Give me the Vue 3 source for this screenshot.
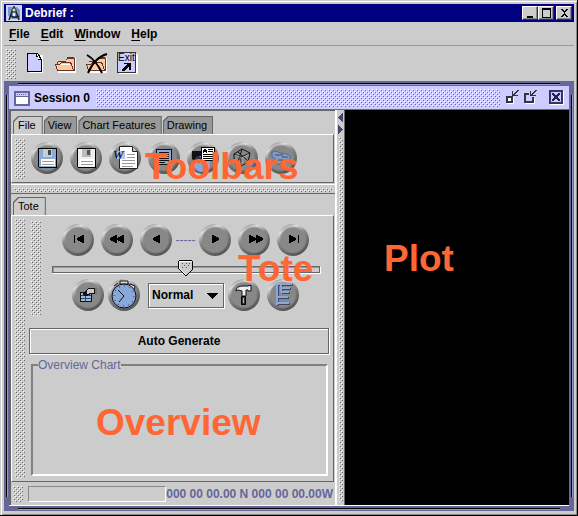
<script setup>
import { ref } from 'vue'

const menus = ['File', 'Edit', 'Window', 'Help']
const tabs = ['File', 'View', 'Chart Features', 'Drawing']
const activeTab = ref('File')
const speed = ref('Normal')
const time = ref(50)

const back = [
  { label: 'Go to start', d: 'M11 10h1v8h-1zM21 10v8h-1l-6-3v-2l6-3z' },
  { label: 'Rewind', d: 'M15 10v8h-1l-6-3v-2l6-3zM22 10v8h-1l-6-3v-2l6-3z' },
  { label: 'Step back', d: 'M19 10v8h-1l-6-3v-2l6-3z' }
]
const forward = [
  { label: 'Step forward', d: 'M12 10v8h1l6-3v-2l-6-3z' },
  { label: 'Fast forward', d: 'M10 10v8h1l6-3v-2l-6-3zM17 10v8h1l6-3v-2l-6-3z' },
  { label: 'Go to end', d: 'M11 10v8h1l6-3v-2l-6-3zM20 10h1v8h-1z' }
]
</script>

<template>
  <div class="window">
    <header class="titlebar">
      <svg class="logo" width="16" height="16" viewBox="0 0 16 16">
        <path fill="#ccd6f0" d="M0 0h16v16H0z" />
        <path fill="#7895cf" d="M2 2h9l3 3v9H5l-3-4z" />
        <path d="M8 1v3M7 4L3 15M9 4l4 11M4 10q4 4 9 1" fill="none" stroke="#222" stroke-width="1.5" />
        <circle cx="8" cy="5" r="2" fill="#ddd" stroke="#333" />
        <path d="M8 8v3" stroke="#eee" stroke-width="2" />
      </svg>
      <h1>Debrief :</h1>
      <div class="winbuttons">
        <button aria-label="Minimize"><svg width="13" height="11"><path d="M3 8h6v2H3z" /></svg></button>
        <button aria-label="Maximize"><svg width="13" height="11"><path d="M2 0h9v10H2zM3 2v7h7V2z" fill-rule="evenodd" /></svg></button>
        <button aria-label="Close" class="close"><svg width="13" height="11"><path d="M3 1h2v1h1v1h1V2h1V1h2v1H9v1H8v1H7v2h1v1h1v1h1v1H8V8H7V7H6v1H5v1H3V8h1V7h1V6h1V4H5V3H4V2H3z" /></svg></button>
      </div>
    </header>

    <nav class="menubar">
      <button v-for="m in menus" :key="m"><u>{{ m[0] }}</u>{{ m.slice(1) }}</button>
    </nav>

    <div class="toolbar">
      <span class="bumps grip"></span>
      <button aria-label="New">
        <svg width="24" height="24" shape-rendering="crispEdges">
          <path fill="#fff" d="M6 3h14v18H6z" /><path fill="#000" d="M4 1h11v1h1v1h1v2h1v2h1v13H4z" />
          <path fill="#ccccff" d="M5 2h8v3h2v3h3v11H5z" /><path fill="#fff" d="M14 2h1v2h1v2h1v1h-2V4h-1z" />
        </svg>
      </button>
      <button aria-label="Open">
        <svg width="24" height="24" shape-rendering="crispEdges">
          <path fill="#fff" d="M14 6h8v14h-8zM4 19h18v2H4z" />
          <path fill="#fc9" d="M12 7h8v11H4v-9h8z" />
          <path fill="#633" d="M13 5h7v2h-7zM12 7h1v1h-1zM4 9h8v1H4zM3 10h1v2H3zM20 6h1v13h-1zM3 18h17v1H3z" />
          <path fill="#fff" d="M7 11h10v1H7z" />
          <path fill="#fc9" stroke="#633" d="M1.500 12.500h4l2-2h9l1 2 2 6h-16z" />
          <path fill="#fff" d="M7 12h9v1H7z" />
        </svg>
      </button>
      <button aria-label="Close file">
        <svg width="24" height="24" shape-rendering="crispEdges">
          <path fill="#fff" d="M14 6h8v14h-8zM4 19h18v2H4z" />
          <path fill="#fc9" d="M12 7h8v11H4v-9h8z" />
          <path fill="#633" d="M13 5h7v2h-7zM4 9h8v1H4zM20 6h1v13h-1zM3 18h17v1H3z" />
          <path fill="#fc9" stroke="#633" d="M1.500 12.500h4l2-2h9l1 2 2 6h-16z" />
          <path shape-rendering="auto" d="M2 3q9 5 15 18M22 2Q10 5 3 21" fill="none" stroke="#000" stroke-width="2" />
        </svg>
      </button>
      <button aria-label="Exit">
        <svg width="24" height="24">
          <g shape-rendering="crispEdges"><path fill="#fff" d="M3 2h19v20H3z" /><path fill="#ccccff" stroke="#333" d="M1.500 .5h18v20h-18z" />
            <path d="M8 11h7v7h-2v-3h-1v1h-1v1h-1v1H9v1H6v-2h1v-1h1v-1h1v-1h1v-1h1v-1H8z" /></g>
          <text x="2" y="9" class="exit">Exit</text>
        </svg>
      </button>
    </div>

    <main class="frame">
      <header class="frametitle">
        <svg width="16" height="16" shape-rendering="crispEdges">
          <path fill="#669" d="M0 1h16v15H0z" /><path fill="#ccf" d="M2 3h12v3H2z" /><path fill="#fff" d="M2 7h12v7H2z" />
          <path fill="#669" d="M3 4h1v1H3zM5 4h1v1H5zM7 4h1v1H7zM9 4h1v1H9zM11 4h1v1h-1z" />
        </svg>
        <h2>Session 0</h2>
        <span class="bumps violet"></span>
        <button aria-label="Iconify">
          <svg width="15" height="15" shape-rendering="crispEdges">
            <path fill="#fff" d="M2 7h7v7H2z" /><path fill="#334" d="M1 6h7v7H1zM3 8v3h3V8z" fill-rule="evenodd" />
            <path fill="#334" d="M7 1h1v3h1V3h1V2h1V1h1V0h2v1h-1v1h-1v1h-1v1h-1v1h3v1H7z" />
          </svg>
        </button>
        <button aria-label="Restore">
          <svg width="15" height="15" shape-rendering="crispEdges">
            <path fill="#fff" d="M2 13h9V8h1v6H2z" /><path fill="#334" d="M1 3h5v2H3v6h6V7h2v6H1zM7 1h1v3h1V3h1V2h1V1h1V0h2v1h-1v1h-1v1h-1v1h-1v1h3v1H7z" />
          </svg>
        </button>
        <button aria-label="Close session" class="closeframe">
          <svg width="15" height="15" shape-rendering="crispEdges">
            <path fill="#fff" d="M1 1h14v14H1z" /><path fill="#336" d="M0 0h14v14H0z" /><path fill="#ccf" d="M2 2h10v10H2z" />
            <path fill="#225" d="M3 3h2v1h1v1h2V4h1V3h2v2h-1v1H9v2h1v1h1v2H9v-1H8V9H6v1H5v1H3V9h1V8h1V6H4V5H3z" />
          </svg>
        </button>
      </header>

      <div class="split">
        <section class="side">
          <div class="tabs">
            <button v-for="t in tabs" :key="t" class="tab" :class="{ on: t === activeTab }" @click="activeTab = t"><span>{{ t }}</span></button>
          </div>
          <div class="panel tools">
            <span class="bumps grip"></span>
            <div class="toolrow">
              <button class="round" aria-label="Save">
                <svg width="30" height="30" shape-rendering="crispEdges"><path d="M6 5h19v20H7l-1-1z" /><path fill="#8aaadd" d="M7 6h17v18H7z" /><path fill="#ccc" d="M11 6h9v8h-9z" /><path fill="#444" d="M16 7h3v5h-3z" /><path fill="#fff" d="M9 16h14v7H9z" /><path fill="#999" d="M10 18h12v1H10zM10 21h12v1H10z" /></svg>
              </button>
              <button class="round" aria-label="Save as">
                <svg width="30" height="30" shape-rendering="crispEdges"><path d="M6 5h19v20H7l-1-1z" /><path fill="#eee" d="M7 6h17v18H7z" /><path fill="#bbb" d="M11 6h9v8h-9z" /><path fill="#555" d="M16 7h3v5h-3z" /><path fill="#fff" d="M9 16h14v7H9z" /><path fill="#999" d="M10 18h12v1H10zM10 21h12v1H10z" /></svg>
              </button>
              <button class="round" aria-label="Export to Word">
                <svg width="30" height="30"><path fill="#fff" stroke="#222" d="M9.500 3.500h13l5 5v17h-18z" /><path fill="#ccc" stroke="#222" d="M22.500 3.500v5h5" /><path stroke="#999" d="M17 11.500h8M17 14.500h8M12 17.500h13M12 20.500h13M12 23.500h11" /><path fill="#b8c6e8" d="M5 8h10v8H5z" /><text x="3" y="16" class="word">W</text></svg>
              </button>
              <button class="round" aria-label="Copy report">
                <svg width="30" height="30" shape-rendering="crispEdges"><path fill="#111" d="M7 6h16v16H7z" /><path fill="#8aaadd" d="M8 7h14v14H8z" /><path stroke="#111" d="M10 9.500h10M10 11.500h10M10 13.500h10M10 15.500h10M10 17.500h10M10 19.500h6" /></svg>
              </button>
              <button class="round" aria-label="Print page">
                <svg width="30" height="30"><path fill="#111" d="M4 8h9l5 8-6 6-8-6z" /><circle cx="14" cy="21" r="8" fill="#88a8dc" /><path d="M5 18l4-5 6 2-3 5z" fill="#334" /><g shape-rendering="crispEdges"><path fill="#fff" stroke="#000" d="M13.500 4.500h13v13h-13z" /><path stroke="#000" d="M20 6.500h5M20 8.500h5M15 11.500h10M15 13.500h10M15 15.500h10" /><path d="M15 10V7h1V6h2v1h1v3h-1V9h-2v1z" /></g></svg>
              </button>
              <button class="round" aria-label="Grid">
                <svg width="30" height="30"><path d="M7 11l8-5 8 4-2 9-7 4-7-5zM7 11l7 3 9-4M14 14v9M15 6l-4 13M11 9l10 9" fill="none" stroke="#111" /><path d="M8 12l7 3 7-4M15 15v7" fill="none" stroke="#ccc" stroke-width=".6" /></svg>
              </button>
              <button class="round" aria-label="Viewer">
                <svg width="30" height="30"><path d="M6 9l4-1 4 2 7 1 4 3-3 3-5 1-3 3h-3v-4l-5-3z" fill="#829bc4" stroke="#566a8c" /><path d="M9 12h8M16 14h6M12 17h5" stroke="#3f4d66" /></svg>
              </button>
            </div>
          </div>
          <div class="hsplit"><span class="bumps"></span></div>

          <div class="tabs second"><button class="tab on"><span>Tote</span></button></div>
          <div class="panel tote">
            <span class="bumps grip"></span>
            <div class="totebody">
              <div class="controls">
                <span class="bumps grip"></span>
                <div class="stack">
                  <div class="row transport">
                    <button v-for="b in back" :key="b.label" class="round" :aria-label="b.label"><svg width="30" height="30" shape-rendering="crispEdges"><path :d="b.d" /></svg></button>
                    <span class="dashes">-----</span>
                    <button v-for="b in forward" :key="b.label" class="round" :aria-label="b.label"><svg width="30" height="30" shape-rendering="crispEdges"><path :d="b.d" /></svg></button>
                  </div>
                  <div class="sliderbox">
                    <input v-model="time" class="slider" type="range" min="0" max="100" aria-label="Time" />
                    <svg class="knob" :style="{ left: `calc((100% - 16px) * ${time / 100})` }" width="16" height="17" shape-rendering="crispEdges"><path d="M1 0h13v1h1v8L8 16H7L0 9V1h1z" /><path fill="#fff" d="M1 1h13v8l-6 6H7L1 9z" /><path fill="#ccc" d="M2 2h12v7l-6 6-6-6z" /><path d="M4 3h1v1H4zM8 3h1v1H8zM12 3h-1v1h1zM6 5h1v1H6zM10 5h1v1h-1zM4 7h1v1H4zM8 7h1v1H8z" fill="#555" /></svg>
                  </div>
                  <div class="row options">
                    <button class="round" aria-label="Properties">
                      <svg width="30" height="30" shape-rendering="crispEdges"><path fill="#111" d="M7 12h12v10H7z" /><path fill="#9db9e8" d="M8 13h10v8H8z" /><path stroke="#345" d="M8 15.500h10M8 18.500h10M12.500 13v8" /><path fill="#111" d="M9 12h3l3-4h7v6h-4l-4 2h-3z" /><path fill="#ccc" d="M14 10l2-1h5v4h-3l-4 1z" /><path fill="#777" d="M22 8h2v6h-2z" /></svg>
                    </button>
                    <button class="round" aria-label="Stopwatch">
                      <svg width="30" height="30"><path d="M11 1h8v3h-8zM21 4l5 2-1 4-5-3zM5 6l4-3" fill="#ddd" stroke="#111" /><circle cx="15" cy="16" r="12" fill="#88a8dc" stroke="#111" /><circle cx="15" cy="16" r="10" fill="none" stroke="#223" stroke-dasharray="1 4.200" /><path d="M9 10l6 6-5 6" fill="none" stroke="#111" /></svg>
                    </button>
                    <span class="combo"><select v-model="speed" aria-label="Speed"><option>Slow</option><option>Normal</option><option>Fast</option></select><svg width="11" height="6" shape-rendering="crispEdges"><path d="M0 0h11v1h-1v1H9v1H8v1H7v1H6v1H5V5H4V4H3V3H2V2H1V1H0z" /></svg></span>
                    <button class="round" aria-label="Tools">
                      <svg width="30" height="30"><path fill="#eee" stroke="#111" d="M7 10q1-4 7-4h5l3-1v6h-3v-1h-2v6h-4v-5q-4-2-6 0z" /><path fill="#333" stroke="#000" d="M12.500 16.500h4v8h-4z" /><path stroke="#bbb" d="M14.500 18v5" /></svg>
                    </button>
                    <button class="round" aria-label="Layers">
                      <svg width="30" height="30" shape-rendering="crispEdges"><path fill="none" stroke="#446" stroke-width="2" d="M10 4v22M10 5h15M14 5v8M14 9h9M14 13h8M10 18h11M10 24h12" /><path fill="none" stroke="#88a8dc" stroke-width="2" d="M9 3v22M9 4h15M13 4v8M13 8h9M13 12h8M9 17h11M9 23h12" /></svg>
                    </button>
                  </div>
                </div>
              </div>
              <button class="auto">Auto Generate</button>
              <fieldset><legend>Overview Chart</legend></fieldset>
            </div>
          </div>
          <footer class="status">
            <span class="bumps grip"></span>
            <span class="message"></span>
            <output>000 00 00.00 N 000 00 00.00W</output>
          </footer>
        </section>

        <div class="vsplit">
          <button aria-label="Collapse left"><svg width="5" height="9" shape-rendering="crispEdges"><path fill="#447" d="M4 0h1v9H4V8H3V7H2V6H1V5H0V4h1V3h1V2h1V1h1z" /></svg></button>
          <button aria-label="Collapse right"><svg width="5" height="9" shape-rendering="crispEdges"><path fill="#447" d="M0 0h1v1h1v1h1v1h1v1h1v1H4v1H3v1H2v1H1v1H0z" /></svg></button>
          <span class="bumps"></span>
        </div>
        <section class="plot"></section>
      </div>
    </main>

    <strong class="note toolbars">Toolbars</strong>
    <strong class="note totenote">Tote</strong>
    <strong class="note plotnote">Plot</strong>
    <strong class="note overview">Overview</strong>
  </div>
</template>

<style>
body { background: #ccc; }
</style>

<style scoped>
* { box-sizing: border-box; }
button { border: 0; padding: 0; margin: 0; background: none; color: inherit; font: inherit; }
svg { display: block; }
h1, h2 { margin: 0; font-size: 12px; line-height: 16px; }
.window { position: relative; display: flex; flex-direction: column; min-height: 100vh; padding: 4px 3px 4px 4px; background: #ccc; border-right: 1px solid #000; border-bottom: 1px solid #000; box-shadow: inset 1px 1px #ccc, inset 2px 2px #fff, inset -1px -1px #888; font: bold 12px "Liberation Sans", sans-serif; color: #000; }
.bumps { --hi: #fff; --lo: #666; display: block; background:
  conic-gradient(from 270deg at 1px 1px, var(--hi) 90deg, transparent 0) 0 0 / 4px 4px,
  conic-gradient(from 270deg at 1px 1px, var(--hi) 90deg, transparent 0) 2px 2px / 4px 4px,
  conic-gradient(from 270deg at 1px 1px, var(--lo) 90deg, transparent 0) 1px 1px / 4px 4px,
  conic-gradient(from 270deg at 1px 1px, var(--lo) 90deg, transparent 0) 3px 3px / 4px 4px; }
.violet { --lo: #669; }
.grip { width: 10px; flex: none; }

.titlebar { display: flex; align-items: center; height: 18px; padding: 0 2px; background: #000080; color: #fff; }
.titlebar h1 { margin-left: 3px; }
.winbuttons { display: flex; margin-left: auto; }
.winbuttons button { width: 16px; height: 14px; padding: 1px; background: #ccc; border: 1px solid; border-color: #fff #333 #333 #fff; box-shadow: inset -1px -1px #888; overflow: hidden; }
.winbuttons .close { margin-left: 2px; }

.menubar { display: flex; gap: 11px; height: 24px; padding: 0 5px; border-bottom: 1px solid #999; }
.menubar u { text-underline-offset: 2px; }

.toolbar { display: flex; align-items: center; height: 35px; padding: 0 2px; }
.toolbar .grip { height: 30px; margin-right: 3px; }
.toolbar button { width: 31px; padding-left: 4px; }
.exit { font: 10px "Liberation Sans", sans-serif; }
.word { font: bold italic 12px "Liberation Serif", serif; fill: #113; }

.frame { flex: 1; display: flex; flex-direction: column; padding: 5px; background:
  linear-gradient(#000, #000) 14px 2px / calc(100% - 28px) 1px no-repeat,
  linear-gradient(#99c, #99c) 14px 3px / calc(100% - 28px) 1px no-repeat,
  linear-gradient(#000, #000) 14px calc(100% - 2px) / calc(100% - 28px) 1px no-repeat,
  linear-gradient(#99c, #99c) 14px calc(100% - 1px) / calc(100% - 28px) 1px no-repeat,
  linear-gradient(#000, #000) 2px 14px / 1px calc(100% - 28px) no-repeat,
  linear-gradient(#99c, #99c) 3px 14px / 1px calc(100% - 28px) no-repeat,
  linear-gradient(#000, #000) calc(100% - 2px) 14px / 1px calc(100% - 28px) no-repeat,
  linear-gradient(#99c, #99c) calc(100% - 1px) 14px / 1px calc(100% - 28px) no-repeat, #669; }
.frametitle { display: flex; align-items: center; height: 24px; padding: 0 5px; background: #ccf; border-bottom: 1px solid #669; }
.frametitle h2 { margin: 0 6px 0 4px; }
.frametitle .bumps { flex: 1; height: 18px; margin-right: 5px; }
.frametitle button + button { margin-left: 3px; }
.frametitle button + .closeframe { margin-left: 11px; }

.split { flex: 1; display: flex; background: #ccc; border-bottom: 1px solid #fff; }
.side { display: flex; flex-direction: column; width: 326px; border-left: 2px solid #666; border-top: 1px solid #666; }
.tabs { display: flex; gap: 1px; padding: 5px 2px 0; }
.tabs.second { padding-top: 3px; }
.tab { position: relative; z-index: 0; height: 18px; padding: 0 5px; background: #666; font: 11px/18px "Liberation Sans", sans-serif; clip-path: polygon(5px 0, 100% 0, 100% 100%, 0 100%, 0 5px); }
.tab::before { content: ""; position: absolute; z-index: -1; inset: 1px 1px 0; background: #999; clip-path: polygon(5px 0, 100% 0, 100% 100%, 0 100%, 0 5px); }
.tab.on { padding: 0 7px 0 5px; }
.tab.on::before { background: #ccc; }
.tab + .tab { padding: 0 6px 0 4px; }
.panel { display: flex; border-top: 1px solid #fff; border-left: 1px solid #fff; border-right: 1px solid #666; border-bottom: 1px solid #666; margin-right: 1px; }
.tools { height: 49px; padding: 4px 3px; }
.tools .grip { height: 40px; }
.toolrow { display: flex; gap: 7px; margin: 3px 0 0 6px; }
.round { width: 32px; height: 32px; flex: none; padding: 1px; border-radius: 50%; background: radial-gradient(circle, #888 0 12px, transparent 14px), linear-gradient(155deg, #888 8%, #ddd 22%, #8a8a8a 42%, #707070 62%, #505050 90%); }
.hsplit { margin-top: 1px; height: 10px; padding: 3px 3px 0; border-top: 1px solid #fff; border-bottom: 1px solid #666; }
.hsplit .bumps { height: 4px; }

.tote { flex: 1; padding: 3px 4px 3px 3px; }
.totebody { flex: 1; display: flex; flex-direction: column; margin-left: 4px; }
.controls { display: flex; padding: 2px 0 0 2px; height: 109px; }
.controls .grip { height: 95px; }
.stack { flex: 1; padding: 3px 9px 0 11px; }
.row { display: flex; align-items: center; }
.transport { gap: 7px; padding-left: 10px; }
.dashes { width: 21px; margin: 0 -4px; color: #669; font: 12px/16px "Liberation Sans", sans-serif; text-align: center; }
.sliderbox { position: relative; height: 18px; margin-top: 4px; display: flex; align-items: center; }
.slider { appearance: none; width: 100%; height: 7px; margin: 0; background: #ccc; border: 1px solid #666; box-shadow: 1px 1px #fff, inset 1px 1px #999; }
.slider::-webkit-slider-thumb { appearance: none; width: 16px; height: 17px; opacity: 0; }
.knob { position: absolute; top: 0; pointer-events: none; }
.options { padding: 1px 0 0 20px; gap: 4px; }
.options .combo { margin: 0 0 0 4px; }
.options .round:last-child { margin-left: 3px; }
.combo { position: relative; width: 76px; height: 25px; }
.combo select { appearance: none; width: 100%; height: 100%; padding: 0 3px; border: 1px solid #666; border-radius: 0; box-shadow: inset 1px 1px #fff, 1px 1px #fff; background: #ccc; color: #000; font: inherit; }
.combo svg { position: absolute; right: 6px; top: 10px; pointer-events: none; }
.auto { height: 26px; border: 1px solid #666; box-shadow: inset 1px 1px #fff, 1px 1px #fff; }
fieldset { flex: 1; min-width: 0; margin: 3px 1px 2px 2px; padding: 0 5px; border: 2px solid; border-color: #808080 #fff #fff #808080; }
legend { padding: 0; color: #669; font-weight: normal; line-height: 16px; }
.status { display: flex; align-items: center; height: 23px; padding: 0 2px; color: #669; }
.status .grip { height: 16px; }
.message { flex: 1; height: 16px; margin-left: 5px; border: 1px solid; border-color: #888 #fff #fff #888; }
.status output { white-space: nowrap; }

.vsplit { display: flex; flex-direction: column; align-items: center; gap: 3px; width: 10px; padding: 3px 0; border-left: 2px solid #fff; border-right: 1px solid #666; }
.vsplit .bumps { flex: 1; width: 4px; }
.plot { flex: 1; background: #000; }

.note { position: absolute; color: #ff6633; font-size: 37px; line-height: 40px; pointer-events: none; }
.toolbars { left: 145px; top: 147px; }
.totenote { left: 238px; top: 249px; }
.plotnote { left: 384px; top: 239px; }
.overview { left: 96px; top: 403px; }
</style>
